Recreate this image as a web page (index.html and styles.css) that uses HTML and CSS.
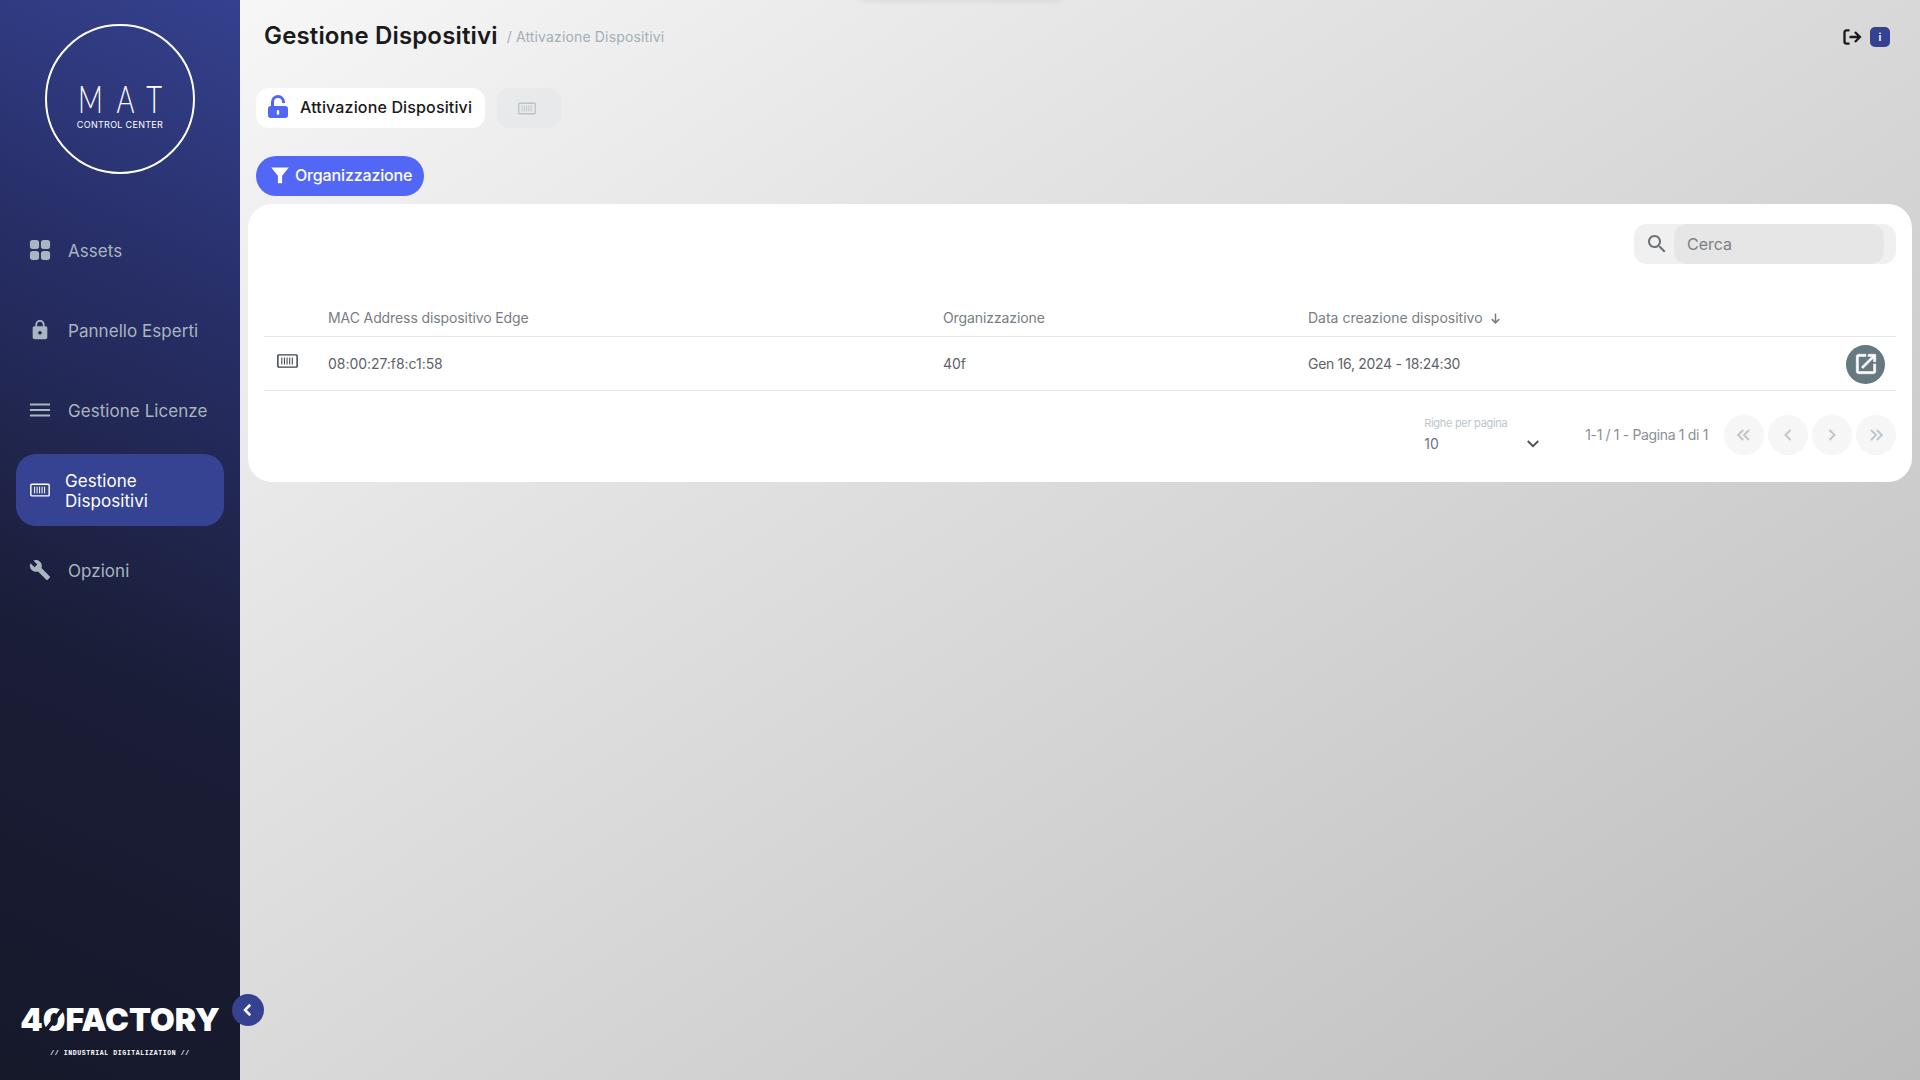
FILE: index.html
```html
<!DOCTYPE html>
<html lang="it">
<head>
    <meta charset="UTF-8">
    <meta name="viewport" content="width=device-width, initial-scale=1.0">
    <title>Gestione Dispositivi</title>
    <link rel="stylesheet" href="styles.css">
</head>
<body>
    <svg class="sprite" aria-hidden="true">
        <symbol id="i-device" viewBox="0 0 24 16">
            <rect x="1" y="1" width="22" height="14" rx="1" fill="none" stroke="currentColor" stroke-width="1.700"/>
            <path d="M5.500 4v8M8.500 4v8M11.500 4v8M14.500 4v8M17.500 4v8" fill="none" stroke="currentColor" stroke-width="1.200"/>
        </symbol>
    </svg>

    <div class="top-glow"></div>

    <aside class="sidebar">
        <div class="brand">
            <div class="brand-circle">
                <span class="brand-name">MAT</span>
                <span class="brand-sub">CONTROL CENTER</span>
            </div>
        </div>

        <nav class="nav">
            <a class="nav-item">
                <svg class="nav-icon" viewBox="0 0 24 24"><rect x="1" y="1" width="10" height="10" rx="3"/><rect x="13" y="1" width="10" height="10" rx="3"/><rect x="1" y="13" width="10" height="10" rx="3"/><rect x="13" y="13" width="10" height="10" rx="3"/></svg>
                <span>Assets</span>
            </a>
            <a class="nav-item">
                <svg class="nav-icon" viewBox="0 0 24 24"><path d="M18 8h-1V6c0-2.760-2.240-5-5-5S7 3.240 7 6v2H6c-1.100 0-2 .9-2 2v10c0 1.100.9 2 2 2h12c1.100 0 2-.9 2-2V10c0-1.100-.9-2-2-2zm-6 9c-1.100 0-2-.9-2-2s.9-2 2-2 2 .9 2 2-.9 2-2 2zm3.100-9H8.900V6c0-1.710 1.390-3.100 3.100-3.100 1.710 0 3.100 1.390 3.100 3.100v2z"/></svg>
                <span>Pannello Esperti</span>
            </a>
            <a class="nav-item">
                <svg class="nav-icon" viewBox="0 0 24 24"><path d="M1 19h22v-2H1v2zm0-6h22v-2H1v2zM1 5v2h22V5H1z"/></svg>
                <span>Gestione Licenze</span>
            </a>
            <a class="nav-item active">
                <svg class="nav-icon-device"><use href="#i-device"/></svg>
                <span>Gestione Dispositivi</span>
            </a>
            <a class="nav-item">
                <svg class="nav-icon" viewBox="0 0 24 24"><path d="M22.700 19l-9.100-9.100c.9-2.300.4-5-1.500-6.900-2-2-5-2.400-7.400-1.300L9 6 6 9 1.600 4.700C.4 7.100.9 10.100 2.900 12.100c1.900 1.900 4.600 2.400 6.900 1.500l9.100 9.100c.4.4 1 .4 1.400 0l2.300-2.300c.5-.4.5-1.100.1-1.400z"/></svg>
                <span>Opzioni</span>
            </a>
        </nav>

        <div class="company">
            <div class="company-name">4<span class="zero">0</span>FACTORY</div>
            <div class="company-tag">// INDUSTRIAL DIGITALIZATION //</div>
        </div>

        <button class="collapse-btn">
            <svg viewBox="0 0 24 24"><path d="M15 5l-7 7 7 7" fill="none" stroke="currentColor" stroke-width="3.400"/></svg>
        </button>
    </aside>

    <main class="main">
        <header class="topbar">
            <div class="titles">
                <h1>Gestione Dispositivi</h1>
                <span class="crumb">/ Attivazione Dispositivi</span>
            </div>
            <div class="top-actions">
                <svg class="logout" viewBox="0 0 24 24"><path d="M9 4H5.500C4.100 4 3 5.100 3 6.500v11C3 18.900 4.100 20 5.500 20H9M9 12h12M15.500 6l6 6-6 6" fill="none" stroke="currentColor" stroke-width="2.800"/></svg>
                <span class="info-badge">i</span>
            </div>
        </header>

        <div class="tabs">
            <button class="tab tab-on">
                <svg class="tab-icon" viewBox="0 0 24 24">
                    <path d="M6.500 11V7a5.500 5.500 0 0 1 11 0v1" fill="none" stroke="#5367f7" stroke-width="3"/>
                    <path d="M4.500 11h15C20.900 11 22 12.100 22 13.500v7c0 1.400-1.100 2.500-2.500 2.500h-15C3.100 23 2 21.900 2 20.500v-7C2 12.100 3.100 11 4.500 11zM12 15c-.7 0-1.200.5-1.200 1.200v2.600c0 .7.5 1.200 1.200 1.200s1.200-.5 1.200-1.200v-2.600c0-.7-.5-1.200-1.200-1.200z" fill="#5367f7" fill-rule="evenodd"/>
                </svg>
                Attivazione Dispositivi
            </button>
            <button class="tab tab-off">
                <svg class="tab-device"><use href="#i-device"/></svg>
            </button>
        </div>

        <button class="filter-btn">
            <svg viewBox="0 0 24 24"><path d="M1.500 3h21l-8 10v9h-5v-9z"/></svg>
            Organizzazione
        </button>

        <section class="card">
            <div class="search-row">
                <div class="search">
                    <svg viewBox="0 0 24 24"><path d="M15.500 14h-.79l-.28-.27C15.410 12.590 16 11.110 16 9.500 16 5.910 13.090 3 9.500 3S3 5.910 3 9.500 5.910 16 9.500 16c1.610 0 3.090-.59 4.230-1.570l.27.28v.79l5 4.990L20.490 19l-4.990-5zm-6 0C7.010 14 5 11.990 5 9.500S7.010 5 9.500 5 14 7.010 14 9.500 11.990 14 9.500 14z"/></svg>
                    <div class="search-input">Cerca</div>
                </div>
            </div>

            <table class="table">
                <thead>
                    <tr>
                        <th class="col-icon"></th>
                        <th class="col-mac">MAC Address dispositivo Edge</th>
                        <th class="col-org">Organizzazione</th>
                        <th class="col-date">Data creazione dispositivo <svg class="sort" viewBox="0 0 24 24"><path d="M12 4v15M6 13l6 6 6-6" fill="none" stroke="currentColor" stroke-width="2.400"/></svg></th>
                        <th class="col-action"></th>
                    </tr>
                </thead>
                <tbody>
                    <tr>
                        <td class="cell-device"><svg class="row-device"><use href="#i-device"/></svg></td>
                        <td>08:00:27:f8:c1:58</td>
                        <td>40f</td>
                        <td class="cell-date">Gen 16, 2024 - 18:24:30</td>
                        <td class="cell-action">
                            <button class="open-btn">
                                <svg viewBox="0 0 24 24"><path d="M19 19H5V5h7V3H5c-1.110 0-2 .9-2 2v14c0 1.100.89 2 2 2h14c1.100 0 2-.9 2-2v-7h-2v7zM14 3v2h3.590l-9.830 9.830 1.410 1.410L19 6.410V10h2V3h-7z"/></svg>
                            </button>
                        </td>
                    </tr>
                </tbody>
            </table>

            <div class="pager">
                <div class="per-page">
                    <label>Righe per pagina</label>
                    <div class="per-page-value">
                        <span>10</span>
                        <svg viewBox="0 0 24 24"><path d="M5 8l7 7 7-7" fill="none" stroke="currentColor" stroke-width="2.400"/></svg>
                    </div>
                </div>
                <span class="page-info">1-1 / 1 - Pagina 1 di 1</span>
                <div class="page-btns">
                    <button class="page-btn"><svg viewBox="0 0 24 24"><path d="M11 6l-6 6 6 6M18 6l-6 6 6 6"/></svg></button>
                    <button class="page-btn"><svg viewBox="0 0 24 24"><path d="M15 6l-6 6 6 6"/></svg></button>
                    <button class="page-btn"><svg viewBox="0 0 24 24"><path d="M9 6l6 6-6 6"/></svg></button>
                    <button class="page-btn"><svg viewBox="0 0 24 24"><path d="M6 6l6 6-6 6M13 6l6 6-6 6"/></svg></button>
                </div>
            </div>
        </section>
    </main>
</body>
</html>
```

FILE: styles.css
```css
* {
    margin: 0;
    padding: 0;
    box-sizing: border-box;
}

body {
    font-family: "Inter", "Noto Sans", sans-serif;
    width: 1920px;
    height: 1080px;
    overflow: hidden;
    display: flex;
    background: linear-gradient(146deg, #fbfbfb 0%, #e4e4e4 35%, #d2d2d2 65%, #bdbdbd 100%);
}

button {
    border: none;
    font-family: inherit;
}

.sprite {
    display: none;
}

.top-glow {
    position: absolute;
    left: 860px;
    top: -4px;
    width: 200px;
    height: 4px;
    box-shadow: 0 0 6px rgba(0, 0, 0, 0.12);
}

/* sidebar */
.sidebar {
    position: relative;
    width: 240px;
    height: 1080px;
    flex-shrink: 0;
    display: flex;
    flex-direction: column;
    background: linear-gradient(205deg, #35418f 0%, #272e66 28%, #1a1d36 62%, #16192a 100%);
}

.brand {
    display: flex;
    justify-content: center;
    padding-top: 24px;
}

.brand-circle {
    width: 150px;
    height: 150px;
    border: 2px solid #fff;
    border-radius: 50%;
    color: #fff;
    display: flex;
    flex-direction: column;
    align-items: center;
    padding-top: 56px;
}

.brand-name {
    font-family: "Lato", sans-serif;
    font-weight: 300;
    font-size: 38px;
    line-height: 32px;
    letter-spacing: 19px;
    margin-right: -14px;
    transform: scaleX(0.72);
}

.brand-sub {
    font-family: "Inter", sans-serif;
    font-size: 9px;
    line-height: 12px;
    margin-top: 5px;
    letter-spacing: 0.3px;
}

.nav {
    margin-top: 40px;
    padding: 0 16px;
    display: flex;
    flex-direction: column;
    gap: 8px;
}

.nav-item {
    height: 72px;
    display: flex;
    align-items: center;
    gap: 17px;
    padding-top: 2px;
    padding-left: 13px;
    font-size: 17px;
    line-height: 20px;
    font-weight: 400;
    color: #a9b5bf;
    letter-spacing: 0.05px;
}

.nav-item.active {
    background: #364393;
    border-radius: 20px;
    color: #fff;
    padding-left: 14px;
    padding-right: 40px;
    gap: 15px;
}

.nav-icon {
    width: 22px;
    height: 22px;
    margin-top: -2px;
    fill: #a9b5bf;
    flex-shrink: 0;
}

.nav-icon-device {
    width: 20px;
    height: 14px;
    margin-top: -2px;
    color: #fff;
    flex-shrink: 0;
}

.company {
    margin-top: auto;
    padding-bottom: 22px;
    text-align: center;
    color: #fff;
}

.company-name {
    font-family: "Inter", sans-serif;
    font-size: 32px;
    line-height: 34px;
    font-weight: 900;
}

.zero {
    position: relative;
    display: inline-block;
}

/* stencil cut through the zero of the logo */
.zero::after {
    content: "";
    position: absolute;
    left: 50%;
    top: 2px;
    width: 4px;
    height: 30px;
    margin-left: -2px;
    background: #16192a;
    transform: rotate(38deg);
}

.company-tag {
    font-family: "Liberation Mono", monospace;
    font-size: 6.5px;
    line-height: 10px;
    margin-top: 12px;
    font-weight: 700;
    letter-spacing: 0.6px;
    margin-bottom: -1px;
}

.collapse-btn {
    position: absolute;
    left: 232px;
    top: 994px;
    width: 32px;
    height: 32px;
    border-radius: 50%;
    background: #35428f;
    color: #fff;
    display: flex;
    align-items: center;
    justify-content: center;
}

.collapse-btn svg {
    width: 18px;
    height: 18px;
}

/* main */
.main {
    flex: 1;
    padding: 0 8px;
    display: flex;
    flex-direction: column;
    align-items: flex-start;
}

.topbar {
    width: 100%;
    height: 72px;
    padding: 17px 22px 0 16px;
    display: flex;
    justify-content: space-between;
    align-items: flex-start;
}

.titles {
    display: flex;
    align-items: center;
    gap: 9px;
}

h1 {
    font-size: 24px;
    line-height: 38px;
    font-weight: 600;
    color: #1a1a1a;
    letter-spacing: 0.15px;
}

.crumb {
    font-size: 14px;
    color: #a3aeb6;
    letter-spacing: 0.15px;
}

.top-actions {
    display: flex;
    align-items: center;
    gap: 8px;
    margin-top: 10px;
}

.logout {
    width: 20px;
    height: 20px;
    color: #1a1a1a;
}

.info-badge {
    width: 20px;
    height: 20px;
    border-radius: 5px;
    background: #35428f;
    color: #fff;
    font-size: 11px;
    font-weight: 600;
    display: flex;
    align-items: center;
    justify-content: center;
}

.tabs {
    margin-top: 16px;
    margin-left: 8px;
    display: flex;
    gap: 12px;
}

.tab {
    height: 40px;
    border-radius: 13px;
    display: flex;
    align-items: center;
    justify-content: center;
}

.tab-on {
    width: 229px;
    justify-content: flex-start;
    padding: 0 0 2px 10px;
    gap: 10px;
    background: #fff;
    font-size: 16px;
    font-weight: 500;
    color: #1a1a1a;
    letter-spacing: 0.15px;
}

.tab-icon {
    width: 24px;
    height: 24px;
}

.tab-off {
    width: 64px;
    padding-right: 4px;
    background: rgba(225, 229, 232, 0.55);
}

.tab-device {
    width: 18px;
    height: 13px;
    color: #b9c3c9;
}

.filter-btn {
    margin-top: 28px;
    margin-left: 8px;
    width: 168px;
    height: 40px;
    border-radius: 20px;
    background: #5367f7;
    color: #fff;
    font-size: 16px;
    font-weight: 500;
    letter-spacing: -0.15px;
    display: flex;
    align-items: center;
    gap: 5px;
    padding: 0 0 3px 14px;
}

.filter-btn svg {
    width: 20px;
    height: 20px;
    fill: #fff;
}

.card {
    margin-top: 8px;
    width: 1664px;
    height: 278px;
    background: #fff;
    border-radius: 24px;
    padding: 20px 16px 0;
}

.search-row {
    display: flex;
    justify-content: flex-end;
}

.search {
    width: 262px;
    height: 40px;
    background: #f0f0f0;
    border-radius: 13px;
    display: flex;
    align-items: center;
    padding-left: 11px;
    padding-right: 12px;
    gap: 5px;
}

.search svg {
    width: 24px;
    height: 24px;
    fill: #6b7176;
    flex-shrink: 0;
}

.search-input {
    flex: 1;
    height: 40px;
    background: #e6e6e6;
    border-radius: 13px;
    font-size: 16px;
    line-height: 40px;
    padding-left: 13px;
    color: #7b7f83;
}

.table {
    width: 100%;
    margin-top: 32px;
    border-collapse: collapse;
    table-layout: fixed;
}

th {
    height: 40px;
    padding-top: 3px;
    font-size: 14px;
    font-weight: 400;
    color: #777e84;
    text-align: left;
    border-bottom: 1px solid #e8e8e8;
    letter-spacing: -0.1px;
}

td {
    height: 54px;
    font-size: 14px;
    color: #5d6368;
    border-bottom: 1px solid #e8e8e8;
    letter-spacing: -0.05px;
}

.col-icon {
    width: 64px;
}

.col-mac {
    width: 615px;
}

.col-org {
    width: 365px;
}

.col-date {
    letter-spacing: 0;
}

.cell-date {
    letter-spacing: -0.3px;
}

.col-action {
    width: 60px;
}

.sort {
    width: 15px;
    height: 15px;
    vertical-align: -3px;
    margin-left: 1px;
}

.cell-device {
    padding-left: 13px;
}

.row-device {
    display: block;
    width: 21px;
    height: 14px;
    margin-top: -4px;
    color: #3f4448;
}

.cell-action {
    text-align: right;
    padding-right: 11px;
}

.open-btn {
    width: 39px;
    height: 39px;
    margin-top: 2px;
    border-radius: 50%;
    background: #667880;
    display: inline-flex;
    align-items: center;
    justify-content: center;
    vertical-align: middle;
}

.open-btn svg {
    width: 26px;
    height: 26px;
    fill: #fff;
    stroke: #fff;
    stroke-width: 0.5;
}

.pager {
    margin-top: 24px;
    display: flex;
    justify-content: flex-end;
    align-items: center;
    height: 40px;
}

.per-page {
    width: 118px;
    margin-right: 43px;
}

.per-page label {
    display: block;
    font-size: 11px;
    line-height: 14px;
    color: #bcc5cb;
    letter-spacing: -0.3px;
}

.per-page-value {
    display: flex;
    justify-content: space-between;
    align-items: center;
    font-size: 14px;
    line-height: 20px;
    margin-top: 4px;
    color: #6f757a;
}

.per-page-value svg {
    width: 18px;
    height: 18px;
    color: #4a5055;
}

.page-info {
    font-size: 14px;
    color: #8a9096;
    letter-spacing: -0.35px;
}

.page-btns {
    display: flex;
    gap: 4px;
    margin-left: 16px;
}

.page-btn {
    width: 40px;
    height: 40px;
    border-radius: 50%;
    background: #f6f6f6;
    display: flex;
    align-items: center;
    justify-content: center;
}

.page-btn svg {
    width: 20px;
    height: 20px;
    fill: none;
    stroke: #c0c7cc;
    stroke-width: 2.400;
}
```
